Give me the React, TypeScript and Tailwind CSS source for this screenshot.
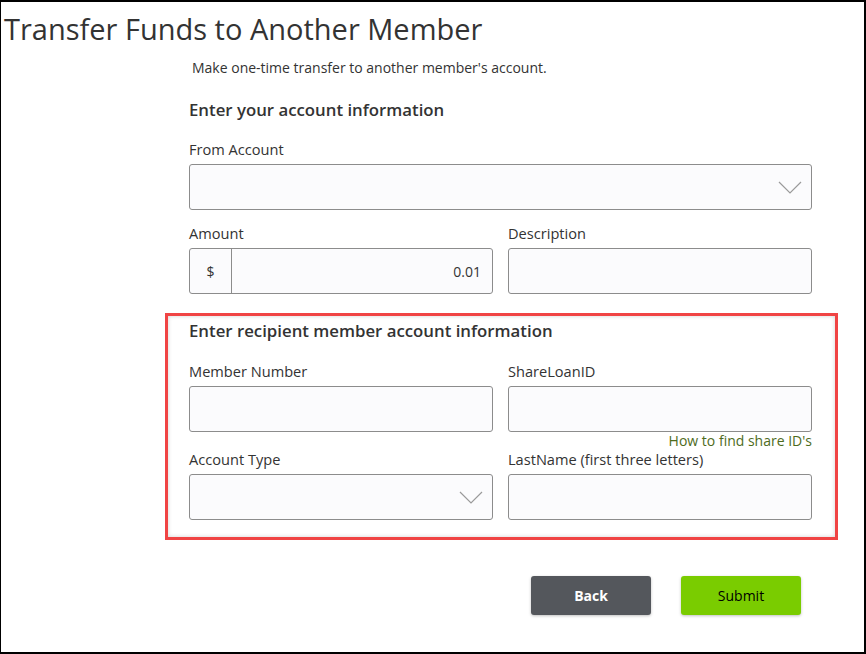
import React from 'react';

const inputClass =
  'block h-[46px] w-full rounded-[3px] border border-[#8c8c8c] bg-[#fbfbfd] px-3 text-[14px] text-[#333] outline-none';

const Label: React.FC<{ children: React.ReactNode }> = ({ children }) => (
  <label className="block h-[20px] text-[14.6px] leading-[20px] text-[#333]">{children}</label>
);

const Chevron = () => (
  <svg
    className="pointer-events-none absolute right-[10px] top-[17px]"
    width="24"
    height="13"
    viewBox="0 0 24 13"
    fill="none"
  >
    <path d="M1 1L12 12L23 1" stroke="#9a9a9a" strokeWidth="1.2" />
  </svg>
);

const SelectBox = () => (
  <div className="relative mt-[5px]">
    <div className={inputClass} />
    <Chevron />
  </div>
);

const TextField = () => <input type="text" className={`${inputClass} mt-[5px]`} />;

export default function App() {
  return (
    <div
      className="h-[654px] w-[866px] border-l border-r-2 border-t-2 border-b-2 border-black bg-white pt-[1px] text-[#333]"
      style={{ fontFamily: '"Open Sans", "Liberation Sans", sans-serif' }}
    >
      <h1 className="pl-[3px] pt-[7px] text-[29px] leading-[38px] font-normal text-[#333]">
        Transfer Funds to Another Member
      </h1>

      <div className="ml-[188px] w-[623px]">
        <p className="mt-[10px] pl-[3px] text-[14px] leading-[20px]">
          Make one-time transfer to another member's account.
        </p>

        <h2 className="mt-[21px] text-[16.8px] font-semibold leading-[22px]">Enter your account information</h2>

        <div className="mt-[18px]">
          <Label>From Account</Label>
          <SelectBox />
        </div>

        <div className="mt-[13px] grid grid-cols-2 gap-x-[15px]">
          <div>
            <Label>Amount</Label>
            <div className="mt-[5px] flex h-[46px] rounded-[3px] border border-[#8c8c8c] bg-[#fbfbfd]">
              <div className="flex w-[42px] items-center justify-center border-r border-[#8c8c8c] text-[14px]">
                $
              </div>
              <div className="flex flex-1 items-center justify-end pr-[11px] text-[14px]">0.01</div>
            </div>
          </div>
          <div>
            <Label>Description</Label>
            <TextField />
          </div>
        </div>

        <div className="-ml-[24px] mt-[19px] w-[673px] border-[3px] border-[#f04444] pb-[17px] pl-[21px] pr-[23px] pt-[4px] shadow-[inset_0_0_4px_rgba(0,0,0,0.18)]">
          <h2 className="text-[16.8px] font-semibold leading-[22px]">Enter recipient member account information</h2>

          <div className="mt-[19px] grid grid-cols-2 gap-x-[15px]">
            <div>
              <Label>Member Number</Label>
              <TextField />
            </div>
            <div>
              <Label>ShareLoanID</Label>
              <TextField />
              <div className="text-right text-[14px] leading-[17px] text-[#4e6b1c]">How to find share ID's</div>
            </div>
            <div>
              <Label>Account Type</Label>
              <SelectBox />
            </div>
            <div>
              <Label>LastName (first three letters)</Label>
              <TextField />
            </div>
          </div>
        </div>

        <div className="mr-[11px] mt-[36px] flex justify-end gap-[30px]">
          <button className="h-[39px] w-[120px] rounded-[3px] bg-[#54575c] text-[14px] font-bold text-white shadow-[0_1px_3px_rgba(0,0,0,0.25)]">
            Back
          </button>
          <button className="h-[39px] w-[120px] rounded-[3px] bg-[#7acc00] text-[14px] font-medium text-black shadow-[0_1px_3px_rgba(0,0,0,0.25)]">
            Submit
          </button>
        </div>
      </div>
    </div>
  );
}
